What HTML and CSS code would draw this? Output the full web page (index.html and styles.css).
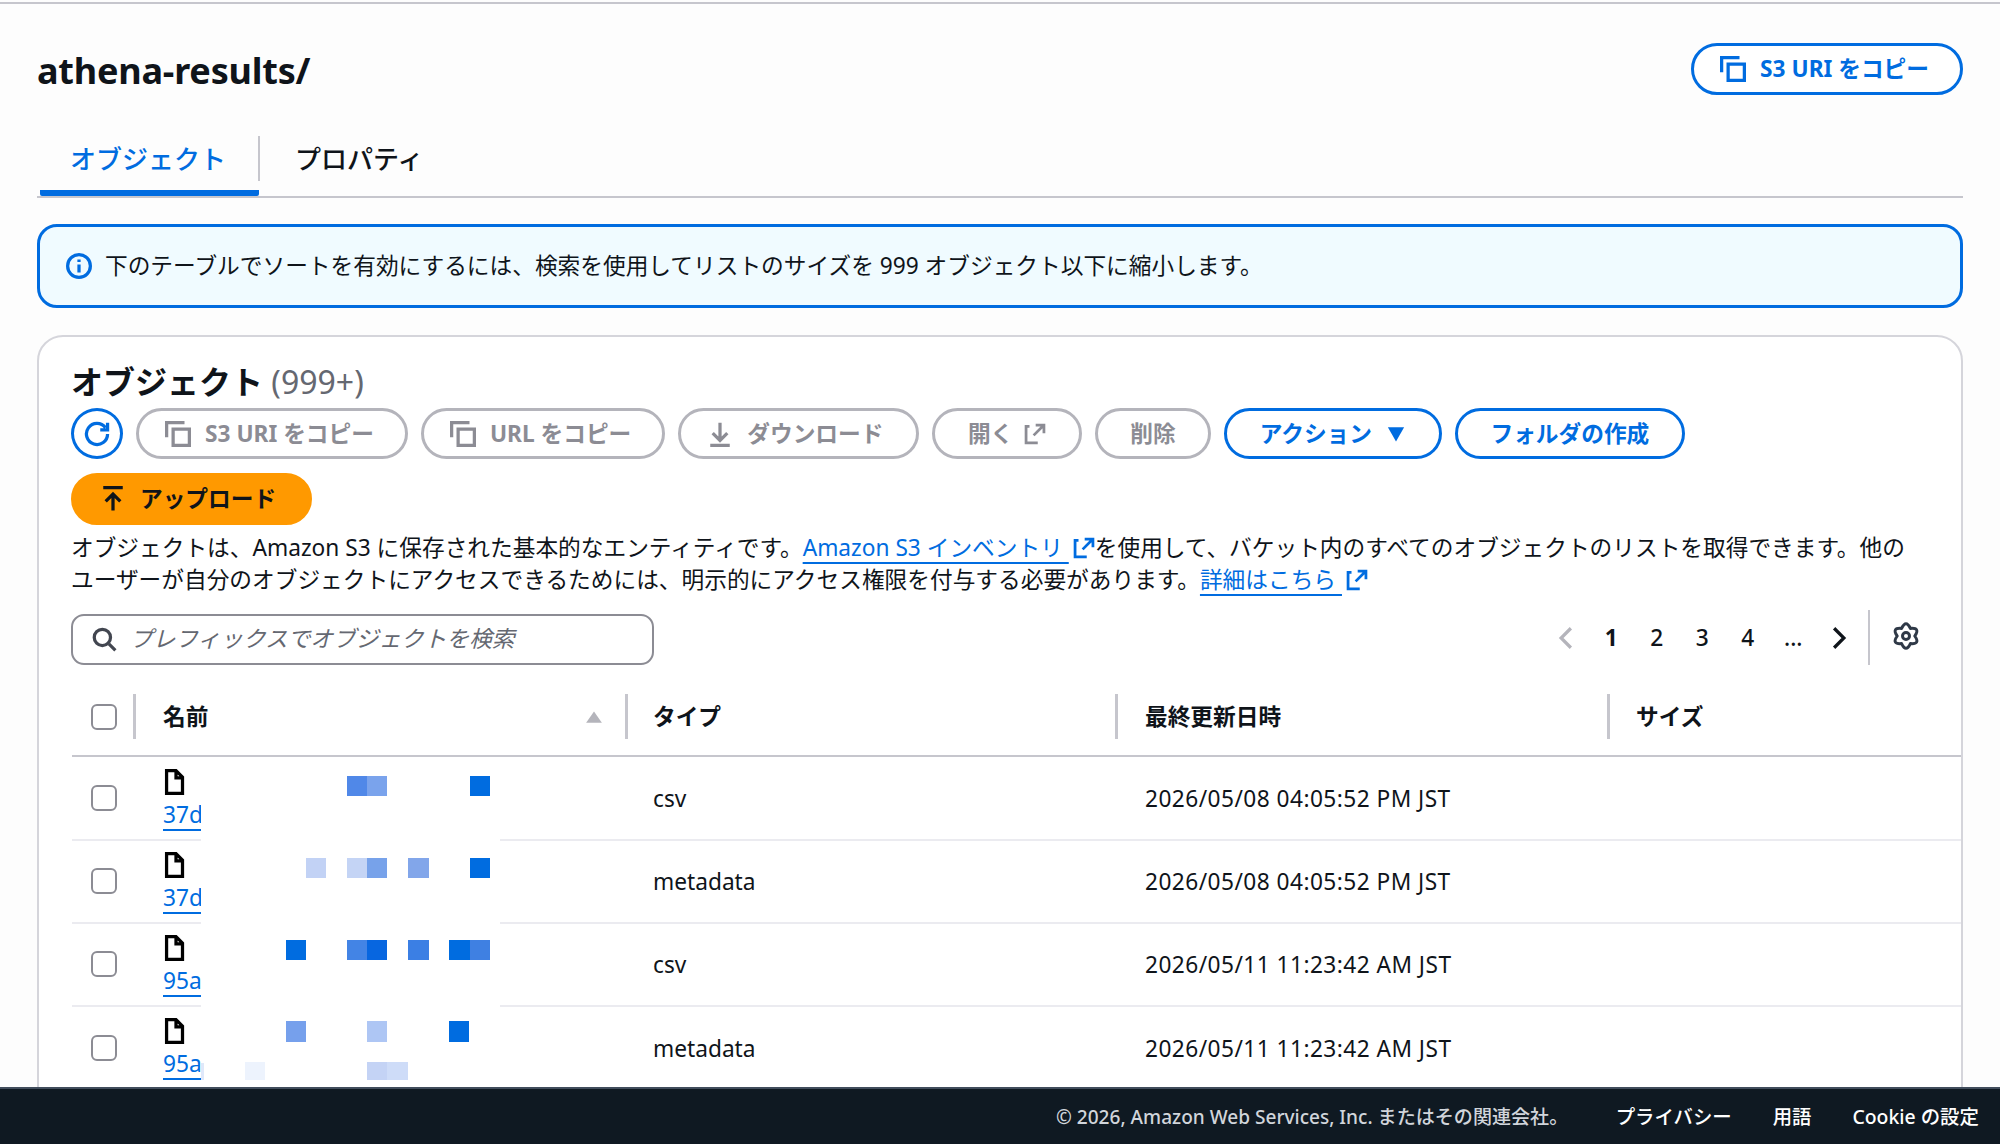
FILE: index.html
```html
<!DOCTYPE html>
<html lang="ja">
<head>
<meta charset="utf-8">
<title>athena-results/</title>
<link rel="stylesheet" href="styles.css">
</head>
<body>
<svg class="sprite" width="0" height="0" aria-hidden="true">
  <symbol id="i-copy" viewBox="0 0 16 16"><path d="M1 10V1h11M5 5h10v10H5z"/></symbol>
  <symbol id="i-download" viewBox="0 0 16 16"><path d="M8 1v11M3.500 7.500 8 12l4.500-4.500M2 15h12"/></symbol>
  <symbol id="i-upload" viewBox="0 0 16 16"><path d="M2 1h12M8 15V5M3.500 9.500 8 5l4.500 4.500"/></symbol>
  <symbol id="i-external" viewBox="0 0 16 16"><path d="M4 2.500H1.500v12H10M7 9l7.500-7.500M8.500 1.500h6v6"/></symbol>
  <symbol id="i-file" viewBox="0 0 16 16"><path d="M8 1H2.200v14H12V5zM8 1.500V5.500h4"/></symbol>
</svg>
<div class="app">
  <main class="main">
    <header class="page-head">
      <h1 class="title">athena-results/</h1>
      <button class="btn btn-icon btn-primary-outline btn-tall"><svg class="ico"><use href="#i-copy"/></svg>S3 URI をコピー</button>
    </header>
    <nav class="tabs">
      <a class="tab tab-active">オブジェクト</a>
      <a class="tab">プロパティ</a>
    </nav>
    <div class="alert">
      <svg class="ico alert-ico" viewBox="0 0 16 16"><circle cx="8" cy="8" r="7"/><path d="M8 7v5M8 4v1.500"/></svg>
      <span>下のテーブルでソートを有効にするには、検索を使用してリストのサイズを 999 オブジェクト以下に縮小します。</span>
    </div>
    <section class="card">
      <h2 class="card-title">オブジェクト <span class="count">(999+)</span></h2>
      <div class="toolbar">
        <button class="btn btn-primary-outline btn-round"><svg class="ico" viewBox="0 0 16 16"><path d="M10 5.500h4.500V1M14.500 8a6.500 6.500 0 1 1-1.300-3.900"/></svg></button>
        <button class="btn btn-icon btn-disabled"><svg class="ico"><use href="#i-copy"/></svg>S3 URI をコピー</button>
        <button class="btn btn-icon btn-disabled"><svg class="ico"><use href="#i-copy"/></svg>URL をコピー</button>
        <button class="btn btn-icon btn-wide btn-disabled"><svg class="ico"><use href="#i-download"/></svg>ダウンロード</button>
        <button class="btn btn-disabled">開く<svg class="ico ext-btn"><use href="#i-external"/></svg></button>
        <button class="btn btn-disabled">削除</button>
        <button class="btn btn-primary-outline">アクション<svg class="caret" viewBox="0 0 16 16"><path d="M1.500 2.500h13L8 14z"/></svg></button>
        <button class="btn btn-primary-outline">フォルダの作成</button>
        <button class="btn btn-icon btn-wide btn-upload"><svg class="ico"><use href="#i-upload"/></svg>アップロード</button>
      </div>
      <p class="desc">オブジェクトは、Amazon S3 に保存された基本的なエンティティです。<a class="link">Amazon S3 インベントリ&nbsp;</a><svg class="ico ext"><use href="#i-external"/></svg>を使用して、バケット内のすべてのオブジェクトのリストを取得できます。他の<br>ユーザーが自分のオブジェクトにアクセスできるためには、明示的にアクセス権限を付与する必要があります。<a class="link">詳細はこちら&nbsp;</a><svg class="ico ext"><use href="#i-external"/></svg></p>
      <div class="filter-row">
        <label class="search">
          <svg class="ico" viewBox="0 0 16 16"><circle cx="7" cy="7" r="5"/><path d="m11 11 4 4"/></svg>
          <input class="search-input" placeholder="プレフィックスでオブジェクトを検索">
        </label>
        <div class="pager">
          <svg class="chev chev-off" viewBox="0 0 16 16"><path d="M11 2 5 8l6 6"/></svg>
          <span class="pg pg-on">1</span>
          <span class="pg">2</span>
          <span class="pg">3</span>
          <span class="pg">4</span>
          <span class="pg">...</span>
          <svg class="chev" viewBox="0 0 16 16"><path d="m5 2 6 6-6 6"/></svg>
          <span class="pager-sep"><svg class="ico gear" viewBox="0 0 16 16"><path d="M5.500 3.670Q8-1.670 10.500 3.670 16.370 3.165 13 8 16.370 12.835 10.500 12.330 8 17.670 5.500 12.330-.37 12.835 3 8-.37 3.165 5.500 3.670Z"/><circle cx="8" cy="8" r="2"/></svg></span>
        </div>
      </div>
      <div class="table">
        <div class="row row-head">
          <div class="cell-check"><span class="check"></span></div>
          <div class="th th-name">名前<svg class="sort" viewBox="0 0 16 16"><path d="M8 3l7 10H1z"/></svg></div>
          <div class="th">タイプ</div>
          <div class="th th-date">最終更新日時</div>
          <div class="th th-size">サイズ</div>
        </div>
        <div class="row row-body">
          <div class="cell-check"><span class="check"></span></div>
          <div class="td-name"><svg class="ico file"><use href="#i-file"/></svg><a class="link key">37d</a></div>
          <div class="td">csv</div>
          <div class="td date">2026/05/08 04:05:52 PM JST</div>
          <div class="td"></div>
        </div>
        <div class="row row-body">
          <div class="cell-check"><span class="check"></span></div>
          <div class="td-name"><svg class="ico file"><use href="#i-file"/></svg><a class="link key">37d</a></div>
          <div class="td">metadata</div>
          <div class="td date">2026/05/08 04:05:52 PM JST</div>
          <div class="td"></div>
        </div>
        <div class="row row-body">
          <div class="cell-check"><span class="check"></span></div>
          <div class="td-name"><svg class="ico file"><use href="#i-file"/></svg><a class="link key">95a</a></div>
          <div class="td">csv</div>
          <div class="td date">2026/05/11 11:23:42 AM JST</div>
          <div class="td"></div>
        </div>
        <div class="row row-body">
          <div class="cell-check"><span class="check"></span></div>
          <div class="td-name"><svg class="ico file"><use href="#i-file"/></svg><a class="link key">95a</a></div>
          <div class="td">metadata</div>
          <div class="td date">2026/05/11 11:23:42 AM JST</div>
          <div class="td"></div>
        </div>
        <svg class="redaction" viewBox="0 0 299 330" aria-hidden="true">
          <rect class="r-bg" width="299" height="330"/>
          <rect x="146" y="19" width="20" height="20" fill="#5088e8"/>
          <rect x="166" y="19" width="20" height="20" fill="#7aa3ec"/>
          <rect x="269" y="19" width="20" height="20" fill="#006ce0"/>
          <rect x="105" y="101" width="20" height="20" fill="#c2d2f5"/>
          <rect x="146" y="101" width="20" height="20" fill="#c4d4f5"/>
          <rect x="166" y="101" width="20" height="20" fill="#77a2ea"/>
          <rect x="207" y="101" width="21" height="20" fill="#82a6ea"/>
          <rect x="269" y="101" width="20" height="20" fill="#006ce0"/>
          <rect x="85" y="183" width="20" height="20" fill="#006ce0"/>
          <rect x="146" y="183" width="20" height="20" fill="#4384e5"/>
          <rect x="166" y="183" width="20" height="20" fill="#0766e0"/>
          <rect x="207" y="183" width="21" height="20" fill="#3b7fe4"/>
          <rect x="248" y="183" width="21" height="20" fill="#006ce0"/>
          <rect x="269" y="183" width="20" height="20" fill="#3f80e2"/>
          <rect x="85" y="264" width="20" height="21" fill="#76a0ec"/>
          <rect x="166" y="264" width="20" height="21" fill="#aec6f4"/>
          <rect x="248" y="264" width="20" height="21" fill="#006ce0"/>
          <rect x="0" y="306" width="3" height="17" fill="#dfe8fa"/>
          <rect x="44" y="305" width="20" height="18" fill="#edf3fd"/>
          <rect x="166" y="305" width="20" height="18" fill="#c4d3f5"/>
          <rect x="186" y="305" width="21" height="18" fill="#cedcf8"/>
        </svg>
      </div>
    </section>
  </main>
  <footer class="footer">
    <span class="copyright">© 2026, Amazon Web Services, Inc. またはその関連会社。</span>
    <a class="foot-link">プライバシー</a>
    <a class="foot-link">用語</a>
    <a class="foot-link">Cookie の設定</a>
  </footer>
</div>
</body>
</html>
```
FILE: styles.css
```css
* { box-sizing: border-box; }
html, body { margin: 0; height: 100%; }
body {
  background: #fdfdfd;
  color: #0f141a;
  font-family: "Noto Sans", "Noto Sans CJK JP", sans-serif;
  font-size: 22.7px;
  line-height: 32px;
}
.sprite { position: absolute; }
.app { display: flex; flex-direction: column; height: 100vh; overflow: hidden; }
.main { flex: 1; min-height: 0; overflow: hidden; padding: 0 37px; border-top: 2px solid #c6c6cd; margin-top: 2px; }

.ico { width: 26px; height: 26px; flex: none; fill: none; stroke: currentColor; stroke-width: 2; }

.page-head { display: flex; justify-content: space-between; align-items: center; padding-top: 39px; height: 91px; }
.title { margin: 0; padding-top: 4px; font-size: 36px; line-height: 52px; font-weight: 700; letter-spacing: -.2px; }

.btn {
  display: inline-flex; align-items: center; justify-content: center; gap: 11px;
  height: 51px; padding: 0 32.5px;
  border: 3px solid; border-radius: 26px; background: #fff;
  font: 700 22.7px/32px "Noto Sans", "Noto Sans CJK JP", sans-serif;
  white-space: nowrap;
}
.btn-icon { padding: 0 31px 0 26px; gap: 14px; }
.btn-wide { padding-right: 33px; }
.btn-tall { height: 52px; }
.btn-primary-outline { color: #006ce0; border-color: #006ce0; }
.btn-disabled { color: #8c8c94; border-color: #b4b4bb; }
.btn-round { width: 52px; padding: 0; border-radius: 50%; }
.btn-upload { background: #ff9900; border-color: #ff9900; color: #0f141a; height: 52px; }
.caret { width: 20px; height: 20px; fill: currentColor; margin-left: 3.5px; stroke: none; }
.ext-btn { width: 22px; height: 22px; }

.tabs { display: flex; height: 65px; margin-top: 38px; padding-left: 3px; border-bottom: 2px solid #c6c6cd; }
.tab { display: flex; align-items: center; height: 63px; padding: 0 35px 12px 36px; font-size: 26px; font-weight: 500; }
.tab-active { position: relative; width: 219px; padding: 0 0 6px 30px; color: #006ce0; border-bottom: 6px solid #006ce0; border-radius: 2px; }
.tab-active::after { content: ""; position: absolute; right: -1px; top: 3px; height: 45px; border-right: 2px solid #c6c6cd; }

.alert {
  display: flex; align-items: center; gap: 13px; height: 84px; margin-top: 26px; padding: 0 26px;
  background: #f0fbff; border: 3px solid #006ce0; border-radius: 20px;
}
.alert-ico { color: #006ce0; }

.card { margin-top: 27px; padding: 21px 32px 0; background: #fff; border: 2px solid #d5d5db; border-radius: 26px; height: 900px; }
.card-title { margin: 0; font-size: 32px; line-height: 48px; font-weight: 700; }
.count { color: #656871; font-weight: 400; }

.toolbar { display: flex; flex-wrap: wrap; gap: 14px 13px; margin-top: 2px; max-width: 1800px; }
.desc { margin: 7px 0 0; white-space: nowrap; }
.link { color: #006ce0; text-decoration: underline; text-decoration-thickness: 2px; text-underline-offset: 6px; }
.ext { color: #006ce0; vertical-align: -3px; width: 22px; height: 22px; margin-left: 4px; }

.filter-row { display: flex; justify-content: space-between; align-items: center; margin-top: 18px; height: 50px; }
.search {
  display: flex; align-items: center; gap: 13px; width: 583px; height: 51px; padding: 0 18px;
  border: 2px solid #8c8c94; border-radius: 13px; color: #424650; background: #fff;
}
.search-input { flex: 1; min-width: 0; border: 0; outline: 0; background: transparent; padding: 0; font: italic 22.7px/32px "Noto Sans", "Noto Sans CJK JP", sans-serif; color: #656871; }
.search-input::placeholder { color: #656871; opacity: 1; }

.pager { display: flex; align-items: center; margin: 0 9px 3px 0; height: 55px; }
.pg { width: 45.5px; text-align: center; font-weight: 500; }
.pg-on { font-weight: 700; }
.chev { width: 26px; height: 26px; fill: none; stroke: #0f141a; stroke-width: 2; margin: 0 10px; }
.chev-off { stroke: #b4b4bb; }
.pager-sep { display: flex; align-items: center; height: 55px; padding-left: 22px; margin-left: 6px; border-left: 2px solid #c6c6cd; }
.gear { width: 28px; height: 28px; margin-bottom: 3px; color: #2f3947; stroke-linejoin: round; stroke-width: 1.7; }

.table { position: relative; margin: 30px -32px 0 1px; }
.row { display: grid; grid-template-columns: 61px 492px 490px 492px 1fr; align-items: center; }
.row-head { height: 62.5px; margin-bottom: 1px; padding-bottom: 15.5px; border-bottom: 2px solid #c6c6cd; }
.row-body { height: 83.2px; border-bottom: 2px solid #ebebf0; background: #fff; }
.cell-check { padding-left: 19px; display: flex; align-items: center; }
.check { width: 26px; height: 26px; border: 2px solid #8c8c94; border-radius: 6px; background: #fff; }
.th { display: flex; align-items: center; height: 45px; padding-left: 25px; border-left: 3px solid #c6c6cd; font-weight: 700; }
.th-name { justify-content: space-between; padding: 0 22px 0 27px; }
.th-date { padding-left: 27px; }
.th-size { padding-left: 26px; }
.sort { width: 18px; height: 18px; fill: #b4b4bb; }
.td { padding: 2px 0 0 28px; }
.date { padding-left: 30px; letter-spacing: .45px; }
.td-name { align-self: start; padding: 11px 0 0 30px; display: flex; flex-direction: column; align-items: flex-start; }
.file { display: block; color: #000; }
.key { display: block; margin-top: 4px; }

.redaction { position: absolute; left: 129px; top: 63px; width: 299px; height: 330px; }
.r-bg { fill: #fff; }

.footer {
  display: flex; align-items: center; flex: none; height: 57px; padding: 0 24px 0 1056px;
  background: #0f1922; border-top: 2px solid #414d5c; color: #fff;
  font-size: 19.4px; line-height: 26px; font-weight: 500; white-space: nowrap;
}
.copyright { color: #d1d5db; font-size: 19.07px; margin-right: 47.5px; }
.foot-link { margin-right: 41px; }
.foot-link:last-child { margin-right: 0; }
```
